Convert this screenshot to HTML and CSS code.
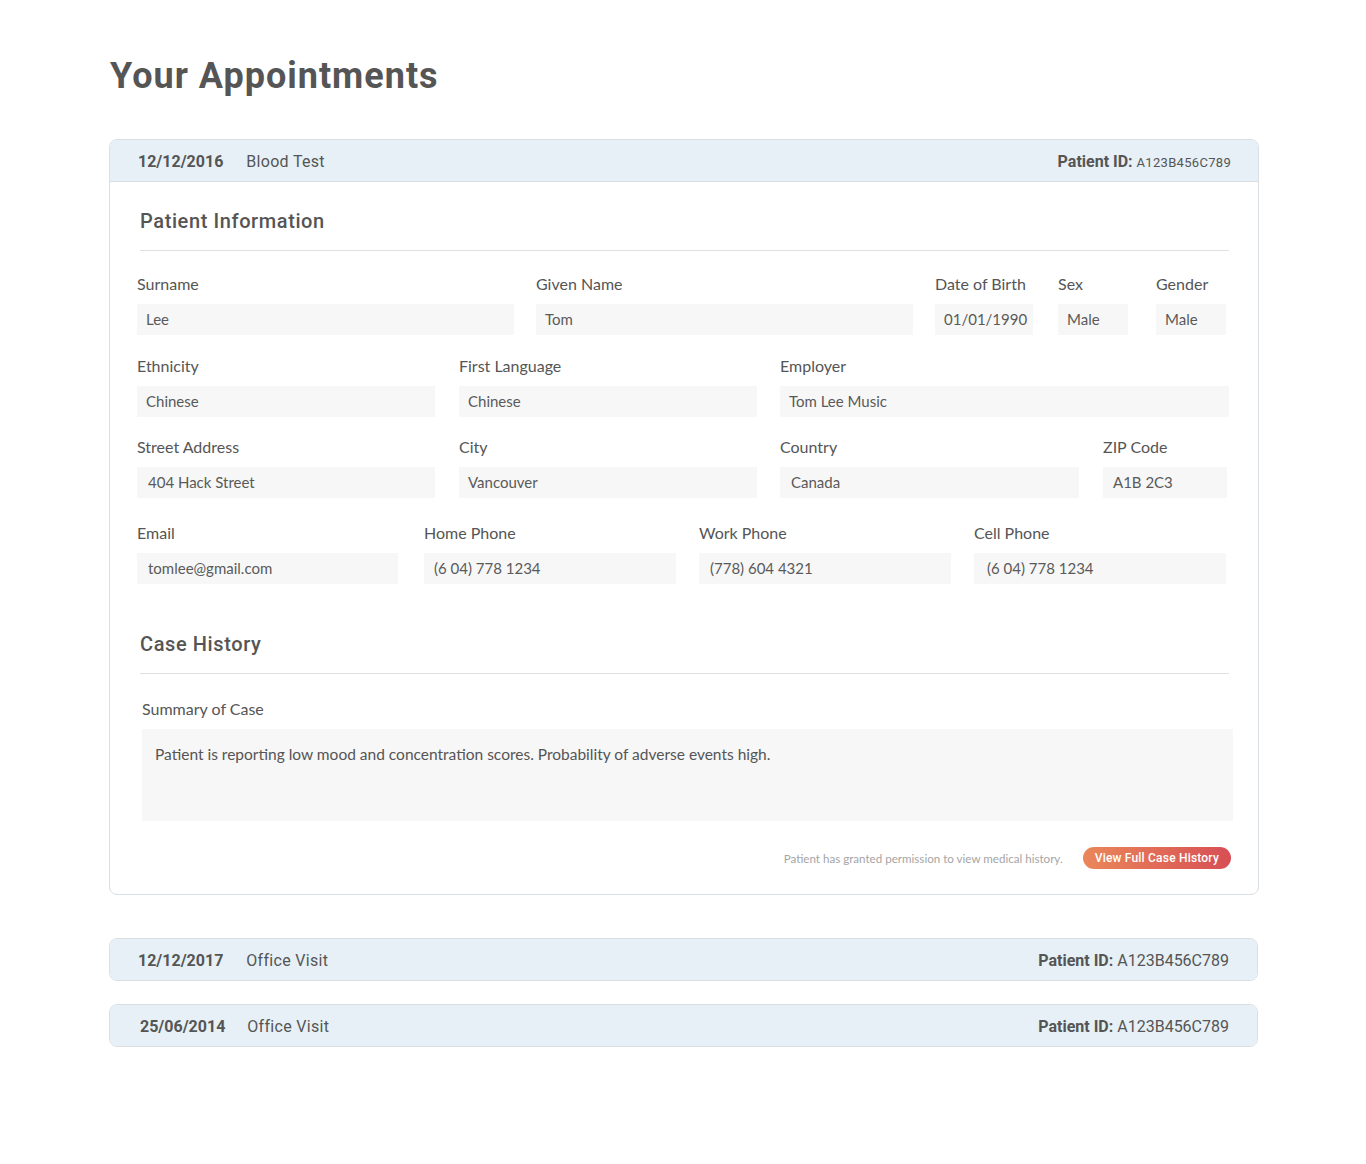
FILE: index.html
```html
<!DOCTYPE html>
<html lang="en">
<head>
<meta charset="utf-8">
<title>Your Appointments</title>
<link rel="stylesheet" href="styles.css">
</head>
<body>
<main class="page">
  <h1 class="page-title">Your Appointments</h1>

  <section class="card card-open">
    <header class="card-head">
      <div class="head-left"><span class="date">12/12/2016</span><span class="type">Blood Test</span></div>
      <div class="pid"><b>Patient ID:</b> <span class="pid-small">A123B456C789</span></div>
    </header>
    <div class="card-body">
      <h2 class="section-title">Patient Information</h2>
      <hr class="divider">

      <div class="row row1">
        <div class="field"><label>Surname</label><div class="input">Lee</div></div>
        <div class="field"><label>Given Name</label><div class="input">Tom</div></div>
        <div class="field"><label>Date of Birth</label><div class="input">01/01/1990</div></div>
        <div class="field f-sex"><label>Sex</label><div class="input">Male</div></div>
        <div class="field f-gender"><label>Gender</label><div class="input">Male</div></div>
      </div>

      <div class="row row2">
        <div class="field"><label>Ethnicity</label><div class="input">Chinese</div></div>
        <div class="field"><label>First Language</label><div class="input">Chinese</div></div>
        <div class="field f-employer"><label>Employer</label><div class="input">Tom Lee Music</div></div>
      </div>

      <div class="row row3">
        <div class="field"><label>Street Address</label><div class="input pad-l">404 Hack Street</div></div>
        <div class="field"><label>City</label><div class="input">Vancouver</div></div>
        <div class="field f-country"><label>Country</label><div class="input pad-l">Canada</div></div>
        <div class="field"><label>ZIP Code</label><div class="input pad-m">A1B 2C3</div></div>
      </div>

      <div class="row row4">
        <div class="field"><label>Email</label><div class="input pad-l">tomlee@gmail.com</div></div>
        <div class="field f-home"><label>Home Phone</label><div class="input pad-m">(6 04) 778 1234</div></div>
        <div class="field"><label>Work Phone</label><div class="input pad-l">(778) 604 4321</div></div>
        <div class="field"><label>Cell Phone</label><div class="input pad-xl">(6 04) 778 1234</div></div>
      </div>

      <h2 class="section-title section-case">Case History</h2>
      <hr class="divider">

      <div class="summary">
        <label>Summary of Case</label>
        <div class="textarea">Patient is reporting low mood and concentration scores. Probability of adverse events high.</div>
      </div>

      <div class="card-foot">
        <span class="note">Patient has granted permission to view medical history.</span>
        <button class="btn">View Full Case History</button>
      </div>
    </div>
  </section>

  <section class="card card-closed first-closed">
    <header class="card-head">
      <div class="head-left"><span class="date">12/12/2017</span><span class="type">Office Visit</span></div>
      <div class="pid"><b>Patient ID:</b> A123B456C789</div>
    </header>
  </section>

  <section class="card card-closed second-closed">
    <header class="card-head">
      <div class="head-left"><span class="date">25/06/2014</span><span class="type">Office Visit</span></div>
      <div class="pid"><b>Patient ID:</b> A123B456C789</div>
    </header>
  </section>
</main>
</body>
</html>
```

FILE: styles.css
```css
* { box-sizing: border-box; }

html, body {
  margin: 0;
  padding: 0;
  background: #ffffff;
}

body {
  font-family: "Source Sans Pro", Lato, "Open Sans", sans-serif;
  color: #555555;
}

.page {
  width: 1150px;
  margin-left: 109px;
  padding-top: 53px;
  padding-bottom: 117px;
}

.page-title {
  margin: 0 0 40px 1px;
  font-family: Roboto, "DejaVu Sans", sans-serif;
  font-weight: 700;
  font-size: 36px;
  line-height: 46px;
  letter-spacing: 1px;
  color: #555555;
}

.card {
  border: 1px solid #d9dfe3;
  border-radius: 8px;
  overflow: hidden;
  background: #ffffff;
}

.card-head {
  height: 42px;
  background: #e6f0f6;
  display: flex;
  align-items: center;
  justify-content: space-between;
  padding: 1px 27px 0 28px;
  font-family: Roboto, "DejaVu Sans", sans-serif;
  font-size: 16px;
  color: #555555;
}

.card-open .card-head {
  border-bottom: 1px solid #d9dfe3;
}

.date {
  font-weight: 700;
  margin-right: 23px;
}

.type {
  font-weight: 400;
  letter-spacing: 0.3px;
}

.pid b { font-weight: 700; }

.pid-small {
  font-size: 13px;
  letter-spacing: 0.3px;
}

.card-body {
  padding: 27px 30px 25px 27px;
}

.section-title {
  margin: 0 0 17px 3px;
  font-family: Roboto, "DejaVu Sans", sans-serif;
  font-weight: 500;
  font-size: 20px;
  line-height: 24px;
  letter-spacing: 0.6px;
  color: #555555;
}

.section-case { margin-top: 48px; }

.divider {
  border: 0;
  border-top: 1px solid #e0e0e0;
  margin: 0 0 0 3px;
  width: 1089px;
}

.row {
  display: grid;
}

.row1 {
  margin-top: 23px;
  grid-template-columns: 377px 377px 98px 73px 76px;
  column-gap: 22px;
}
.f-sex { margin-left: 3px; }
.f-gender { margin-left: 6px; }

.row2 {
  margin-top: 21px;
  grid-template-columns: 298px 298px 448px;
  column-gap: 24px;
}
.f-employer { margin-left: -1px; }

.row3 {
  margin-top: 20px;
  grid-template-columns: 298px 298px 298px 124px;
  column-gap: 24px;
}
.f-country { margin-left: -1px; }

.row4 {
  margin-top: 25px;
  grid-template-columns: 261px 255px 252px 252px;
  column-gap: 23px;
}
.f-home { margin-left: 3px; }

.field label,
.summary label {
  display: block;
  font-size: 16px;
  line-height: 20px;
  height: 20px;
  margin-bottom: 10px;
  color: #555555;
}

.input {
  height: 31px;
  background: #f7f7f7;
  font-size: 15px;
  line-height: 31px;
  padding-left: 9px;
  color: #5a5a5a;
  white-space: nowrap;
}
.input.pad-m { padding-left: 10px; }
.input.pad-l { padding-left: 11px; }
.input.pad-xl { padding-left: 13px; }

.summary {
  margin: 25px 0 0 5px;
  width: 1091px;
}

.textarea {
  height: 92px;
  background: #f7f7f7;
  padding: 15px 13px;
  font-size: 15.5px;
  line-height: 20px;
  color: #555555;
}

.card-foot {
  display: flex;
  justify-content: flex-end;
  align-items: center;
  gap: 20px;
  margin-top: 26px;
  margin-right: -3px;
}

.note {
  font-size: 11.6px;
  color: #a5a5a5;
}

.btn {
  height: 22px;
  border: 0;
  border-radius: 11px;
  padding: 0 12px;
  background: linear-gradient(90deg, #ea8759 0%, #d74f55 100%);
  color: #ffffff;
  font-family: Roboto, "DejaVu Sans", sans-serif;
  font-weight: 500;
  font-size: 12px;
  letter-spacing: 0.2px;
  cursor: pointer;
}

.card-closed {
  width: 1149px;
}
.card-closed .card-head {
  height: 41px;
  padding-right: 28px;
}
.first-closed { margin-top: 43px; }
.second-closed { margin-top: 23px; }
.second-closed .card-head { padding-left: 30px; }
.second-closed .date { margin-right: 22px; }
```
